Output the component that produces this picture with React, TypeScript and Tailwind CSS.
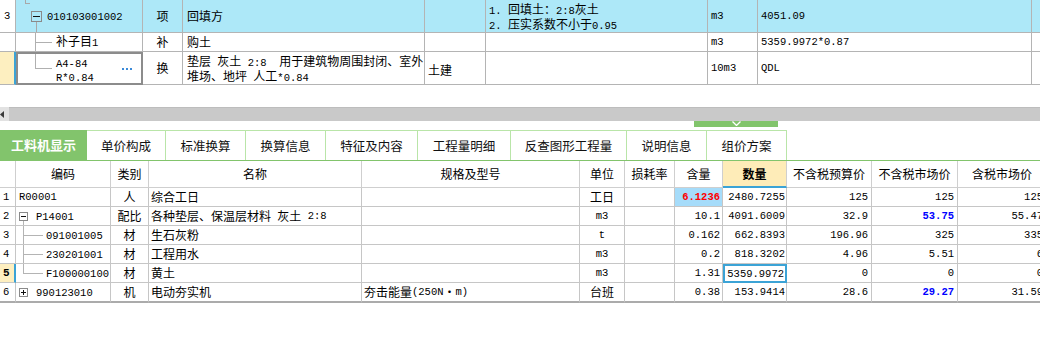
import React from "react";

function T({ t }: { t: string }) {
  const parts = t.split(/([\x20-\x7e]+)/).filter((p) => p.length > 0);
  return (
    <>
      {parts.map((p, i) =>
        /^[\x20-\x7e]+$/.test(p) ? (
          <span key={i} className="font-['Liberation_Mono',monospace] text-[10.5px] whitespace-pre">
            {p}
          </span>
        ) : (
          <span key={i}>{p}</span>
        )
      )}
    </>
  );
}

function Box({ s, plus, fill }: { s: number; plus?: boolean; fill: string }) {
  const m = Math.floor(s / 2) + 0.5;
  return (
    <svg width={s} height={s} viewBox={`0 0 ${s} ${s}`} className="block shrink-0">
      <rect x={0.5} y={0.5} width={s - 1} height={s - 1} fill={fill} stroke="#8a8a8a" />
      <line x1={2} y1={m} x2={s - 2} y2={m} stroke="#111" />
      {plus && <line x1={m} y1={2} x2={m} y2={s - 2} stroke="#111" />}
    </svg>
  );
}

const topGrid = "grid grid-cols-[16px_127px_40px_242px_61px_222px_50px_274px_1fr]";
const tc = "border-r border-b border-[#b4b4b4] flex items-center whitespace-nowrap min-w-0";
const blue = "bg-[#ade8f8]";

function TopTable() {
  return (
    <div className="w-[1040px]">
      {/* row 1 */}
      <div className={`${topGrid} h-[33px]`}>
        <div className={`${tc} bg-white pl-[4px]`}>
          <T t="3" />
        </div>
        <div className={`${tc} ${blue} items-stretch`}>
          <div className="ml-[9px] w-[5px] h-[4px] border-l border-b border-[#a8a8a8] self-start" />
          <div className="ml-px w-[11px] flex flex-col items-center">
            <div className="flex-1" />
            <Box s={11} fill="#ade8f8" />
            <div className="flex-1 w-px bg-[#a8a8a8]" />
          </div>
          <div className="ml-[5px] self-center">
            <T t="010103001002" />
          </div>
        </div>
        <div className={`${tc} ${blue} justify-center`}>项</div>
        <div className={`${tc} ${blue} pl-[4px]`}>回填方</div>
        <div className={`${tc} ${blue}`} />
        <div className={`${tc} ${blue} pl-[3px]`}>
          <div className="flex flex-col">
            <div className="h-[15px] leading-[15px]">
              <T t="1. " />
              回填土：
              <T t="2:8" />
              灰土
            </div>
            <div className="h-[15px] leading-[15px]">
              <T t="2. " />
              压实系数不小于
              <T t="0.95" />
            </div>
          </div>
        </div>
        <div className={`${tc} ${blue} pl-[3px]`}>
          <T t="m3" />
        </div>
        <div className={`${tc} ${blue} pl-[3px]`}>
          <T t="4051.09" />
        </div>
        <div className={`border-b border-[#b4b4b4] ${blue}`} />
      </div>
      {/* row 2 */}
      <div className={`${topGrid} h-[19px]`}>
        <div className={`${tc} bg-white`} />
        <div className={`${tc} items-stretch`}>
          <div className="ml-[19px] w-[17px] flex flex-col">
            <div className="flex-1 border-l border-b border-[#b0b0b0]" />
            <div className="flex-1 border-l border-[#b0b0b0]" />
          </div>
          <div className="ml-[4px] self-center">
            补子目
            <T t="1" />
          </div>
        </div>
        <div className={`${tc} justify-center`}>补</div>
        <div className={`${tc} pl-[4px]`}>购土</div>
        <div className={tc} />
        <div className={tc} />
        <div className={`${tc} pl-[3px]`}>
          <T t="m3" />
        </div>
        <div className={`${tc} pl-[3px]`}>
          <T t="5359.9972*0.87" />
        </div>
        <div className="border-b border-[#b4b4b4]" />
      </div>
      {/* row 3 */}
      <div className={`${topGrid} h-[33px]`}>
        <div className={`${tc} bg-[#fdefc0] border-r-2 border-r-[#3ba3d6]`} />
        <div className="border-2 border-[#8c8c8c] flex items-stretch min-w-0">
          <div className="ml-[17px] w-[17px] flex flex-col">
            <div className="flex-1 border-l border-b border-[#b0b0b0]" />
            <div className="flex-1" />
          </div>
          <div className="ml-[4px] self-center flex flex-col">
            <div className="h-[14px] leading-[14px]">
              <T t="A4-84" />
            </div>
            <div className="h-[14px] leading-[14px]">
              <T t="R*0.84" />
            </div>
          </div>
          <div className="ml-auto mr-[9px] self-center flex gap-[2px]">
            <div className="w-[2px] h-[2px] bg-[#3b8ad8]" />
            <div className="w-[2px] h-[2px] bg-[#3b8ad8]" />
            <div className="w-[2px] h-[2px] bg-[#3b8ad8]" />
          </div>
        </div>
        <div className={`${tc} justify-center`}>换</div>
        <div className={`${tc} pl-[4px]`}>
          <div className="flex flex-col">
            <div className="h-[15px] leading-[15px]">
              垫层
              <T t=" " />
              灰土
              <T t=" 2:8  " />
              用于建筑物周围封闭、室外
            </div>
            <div className="h-[15px] leading-[15px]">
              堆场、地坪
              <T t=" " />
              人工
              <T t="*0.84" />
            </div>
          </div>
        </div>
        <div className={`${tc} pl-[3px] pt-[3px]`}>土建</div>
        <div className={tc} />
        <div className={`${tc} pl-[3px]`}>
          <T t="10m3" />
        </div>
        <div className={`${tc} pl-[3px]`}>
          <T t="QDL" />
        </div>
        <div className="border-b border-[#b4b4b4]" />
      </div>
    </div>
  );
}

function ScrollArea() {
  return (
    <div className="w-[1040px]">
      <div className="h-[22px]" />
      <div className="flex h-[14px]">
        <div className="w-[9px] bg-[#e2e2e2] flex items-center">
          <svg width="4" height="7" viewBox="0 0 4 7" className="block">
            <path d="M0 3.5 L4 0 L4 7 Z" fill="#3a3a3a" />
          </svg>
        </div>
        <div className="flex-1 bg-[#c9c9c9] border-t border-[#bdbdbd]" />
      </div>
      <div className="h-[9px] flex items-start">
        <div className="ml-[694px] w-[84px] h-[6px] bg-[#82c46c] flex justify-center items-start">
          <svg width="9" height="5" viewBox="0 0 9 5" className="block">
            <path d="M0.5 0.5 L4.5 4.5 L8.5 0.5" fill="none" stroke="#ffffff" strokeWidth="1.3" />
          </svg>
        </div>
      </div>
    </div>
  );
}

const tabs: [string, string][] = [
  ["单价构成", "w-[79px]"],
  ["标准换算", "w-[80px]"],
  ["换算信息", "w-[80px]"],
  ["特征及内容", "w-[92px]"],
  ["工程量明细", "w-[93px]"],
  ["反查图形工程量", "w-[116px]"],
  ["说明信息", "w-[80px]"],
  ["组价方案", "w-[80px]"],
];

function Tabs() {
  return (
    <div className="w-[1040px] h-[31px] flex border-b border-[#82c46c]">
      <div className="w-[87px] h-full bg-[#82c46c] text-white font-bold text-[13px] flex items-center justify-center">
        工料机显示
      </div>
      {tabs.map(([label, w]) => (
        <div
          key={label}
          className={`${w} h-full border-t border-r border-[#b9e5a8] flex items-center justify-center text-[12.5px] text-[#111]`}
        >
          {label}
        </div>
      ))}
    </div>
  );
}

const lowGrid = "grid grid-cols-[16px_95px_38px_213px_218px_45px_50px_48px_64px_85px_86px_89px] w-[1047px]";
const lc = "border-r border-b border-[#c6c6c6] flex items-center overflow-hidden whitespace-nowrap";
const hc = "border-r border-b border-[#cfcfcf] flex items-center justify-center whitespace-nowrap";

type Kind = "plain" | "parent" | "child" | "last" | "plus";
type Row = {
  n: string;
  kind: Kind;
  code: string;
  cat: string;
  name: string;
  spec: string;
  unit: string;
  qty: string;
  amt: string;
  p1: string;
  p2: string;
  p3: string;
  p2blue?: boolean;
};

const rows: Row[] = [
  { n: "1", kind: "plain", code: "R00001", cat: "人", name: "综合工日", spec: "", unit: "工日", qty: "6.1236", amt: "2480.7255", p1: "125", p2: "125", p3: "125" },
  { n: "2", kind: "parent", code: "P14001", cat: "配比", name: "各种垫层、保温层材料 灰土 2:8", spec: "", unit: "m3", qty: "10.1", amt: "4091.6009", p1: "32.9", p2: "53.75", p3: "55.47", p2blue: true },
  { n: "3", kind: "child", code: "091001005", cat: "材", name: "生石灰粉", spec: "", unit: "t", qty: "0.162", amt: "662.8393", p1: "196.96", p2: "325", p3: "335" },
  { n: "4", kind: "child", code: "230201001", cat: "材", name: "工程用水", spec: "", unit: "m3", qty: "0.2", amt: "818.3202", p1: "4.96", p2: "5.51", p3: "6" },
  { n: "5", kind: "last", code: "F100000100", cat: "材", name: "黄土", spec: "", unit: "m3", qty: "1.31", amt: "5359.9972", p1: "0", p2: "0", p3: "0" },
  { n: "6", kind: "plus", code: "990123010", cat: "机", name: "电动夯实机", spec: "夯击能量(250N・m)", unit: "台班", qty: "0.38", amt: "153.9414", p1: "28.6", p2: "29.27", p3: "31.59", p2blue: true },
];

function CodeCell({ r, cls }: { r: Row; cls: string }) {
  if (r.kind === "plain") {
    return (
      <div className={`${cls} pl-[3px]`}>
        <T t={r.code} />
      </div>
    );
  }
  if (r.kind === "parent") {
    return (
      <div className={`${cls} items-stretch`}>
        <div className="ml-[3px] w-[9px] flex flex-col items-center">
          <div className="flex-1" />
          <Box s={9} fill="#ffffff" />
          <div className="flex-1 w-px bg-[#b4b4b4]" />
        </div>
        <div className="ml-[8px] self-center">
          <T t={r.code} />
        </div>
      </div>
    );
  }
  if (r.kind === "plus") {
    return (
      <div className={cls}>
        <div className="ml-[3px]">
          <Box s={9} plus fill="#ffffff" />
        </div>
        <div className="ml-[8px]">
          <T t={r.code} />
        </div>
      </div>
    );
  }
  return (
    <div className={`${cls} items-stretch`}>
      <div className="ml-[7px] w-[20px] flex flex-col">
        <div className="flex-1 border-l border-b border-[#b4b4b4]" />
        {r.kind === "child" ? <div className="flex-1 border-l border-[#b4b4b4]" /> : <div className="flex-1" />}
      </div>
      <div className="ml-[3px] self-center">
        <T t={r.code} />
      </div>
    </div>
  );
}

function LowerTable() {
  return (
    <div className="w-[1040px] overflow-hidden">
      <div className={`${lowGrid} h-[27px] text-[12px]`}>
        <div className={hc} />
        <div className={hc}>编码</div>
        <div className={hc}>类别</div>
        <div className={hc}>名称</div>
        <div className={hc}>规格及型号</div>
        <div className={hc}>单位</div>
        <div className={hc}>损耗率</div>
        <div className={hc}>含量</div>
        <div className="border-r border-[#cfcfcf] border-b-2 border-b-[#3ba3d6] bg-[#feecb8] font-bold flex items-center justify-center">
          数量
        </div>
        <div className={hc}>不含税预算价</div>
        <div className={hc}>不含税市场价</div>
        <div className={hc}>含税市场价</div>
      </div>
      {rows.map((r, i) => {
        const last = i === rows.length - 1;
        const cls = last
          ? "border-r border-[#c6c6c6] border-b-2 border-b-[#ababab] flex items-center overflow-hidden whitespace-nowrap"
          : lc;
        const sel = r.n === "5";
        return (
          <div key={r.n} className={`${lowGrid} ${last ? "h-[20px]" : "h-[19px]"}`}>
            {sel ? (
              <div className="border-b border-[#c6c6c6] border-r-2 border-r-[#3ba3d6] bg-[#feefc0] flex items-center pl-[3px] font-bold">
                <span className="font-['Liberation_Mono',monospace] text-[11px] font-bold">{r.n}</span>
              </div>
            ) : (
              <div className={`${cls} pl-[3px]`}>
                <T t={r.n} />
              </div>
            )}
            <CodeCell r={r} cls={cls} />
            <div className={`${cls} justify-center`}>{r.cat}</div>
            <div className={`${cls} pl-[2px]`}>
              <T t={r.name} />
            </div>
            <div className={`${cls} pl-[2px]`}>
              <T t={r.spec} />
            </div>
            <div className={`${cls} justify-center`}>
              <T t={r.unit} />
            </div>
            <div className={cls} />
            {r.n === "1" ? (
              <div className={`${cls} justify-end pr-[2px] bg-[#a6dcfa] text-[#ff0000] font-bold`}>
                <span className="font-['Liberation_Mono',monospace] text-[10.5px] font-bold">{r.qty}</span>
              </div>
            ) : (
              <div className={`${cls} justify-end pr-[2px]`}>
                <T t={r.qty} />
              </div>
            )}
            {sel ? (
              <div className="border-2 border-[#3ba3d6] flex items-center justify-end pr-[1px]">
                <T t={r.amt} />
              </div>
            ) : (
              <div className={`${cls} justify-end pr-[1px]`}>
                <T t={r.amt} />
              </div>
            )}
            <div className={`${cls} justify-end pr-[3px]`}>
              <T t={r.p1} />
            </div>
            {r.p2blue ? (
              <div className={`${cls} justify-end pr-[3px] text-[#0000ff]`}>
                <span className="font-['Liberation_Mono',monospace] text-[10.5px] font-bold">{r.p2}</span>
              </div>
            ) : (
              <div className={`${cls} justify-end pr-[3px]`}>
                <T t={r.p2} />
              </div>
            )}
            <div className={`${cls} justify-end pr-[3px]`}>
              <T t={r.p3} />
            </div>
          </div>
        );
      })}
    </div>
  );
}

export default function App() {
  return (
    <div className="w-[1040px] h-[360px] bg-white overflow-hidden font-['Noto_Sans_CJK_SC',sans-serif] text-[12px] leading-[14px] text-black">
      <TopTable />
      <ScrollArea />
      <Tabs />
      <LowerTable />
    </div>
  );
}
